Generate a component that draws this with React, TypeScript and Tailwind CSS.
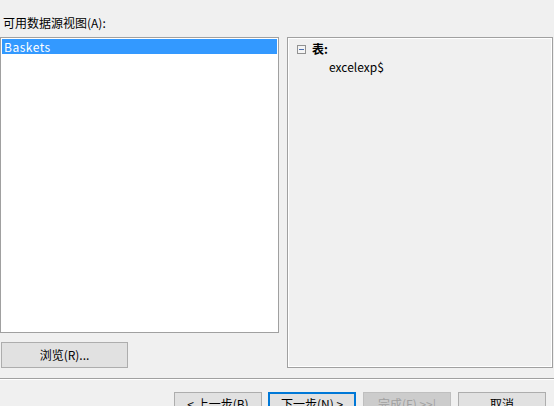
export default function App() {
  return (
    <div className="w-[554px] h-[406px] overflow-hidden bg-[#f0f0f0] text-[12px] text-black font-['Microsoft_YaHei','Noto_Sans_CJK_SC',sans-serif]">
      <div className="pt-[15px] pl-[3px] h-[37px] leading-[16px]">可用数据源视图(A):</div>

      <div className="flex h-[331px]">
        {/* left: view list + browse */}
        <div className="w-[279px] flex flex-col">
          <div className="h-[296px] bg-white border border-[#a0a0a0] p-[1px]">
            <div className="h-[15px] bg-[#3399ff] text-white pl-[2px] leading-[15px] tracking-[0.5px]">Baskets</div>
          </div>
          <button className="mt-[9px] ml-[1px] w-[127px] h-[26px] border border-[#adadad] bg-[#e1e1e1] text-[12px] leading-[16px]">
            浏览(R)...
          </button>
        </div>

        {/* right: tree of tables */}
        <div className="ml-[8px] w-[266px] border border-[#a0a0a0] shadow-[inset_1px_1px_0_#ffffff,inset_-1px_-1px_0_#ffffff] pt-[3px]">
          <div className="flex items-center h-[16px] pl-[9px]">
            <div className="w-[9px] h-[9px] border border-[#919191] bg-[#f4f4f4] flex items-center justify-center">
              <div className="w-[5px] h-[1px] bg-[#4b6eaf]" />
            </div>
            <span className="ml-[6px] leading-[16px] font-semibold">表:</span>
          </div>
          <div className="pl-[41px] mt-[2px] leading-[16px]">excelexp$</div>
        </div>
      </div>

      <div className="mt-[10px] border-t border-[#a0a0a0] border-b border-b-white" />

      <div className="flex justify-end pr-[8px] mt-[12px] gap-[6px]">
        <button className="w-[88px] h-[23px] border border-[#adadad] bg-[#e1e1e1] leading-[16px]">&lt; 上一步(B)</button>
        <button className="w-[88px] h-[23px] border border-[#0078d7] bg-[#e1e1e1] leading-[16px] shadow-[inset_0_0_0_1px_#0078d7]">下一步(N) &gt;</button>
        <button className="ml-[1px] w-[88px] h-[23px] border border-[#bfbfbf] bg-[#cccccc] text-[#a0a0a0] leading-[16px]">完成(F) &gt;&gt;|</button>
        <button className="ml-[1px] w-[88px] h-[23px] border border-[#adadad] bg-[#e1e1e1] leading-[16px]">取消</button>
      </div>
    </div>
  );
}
